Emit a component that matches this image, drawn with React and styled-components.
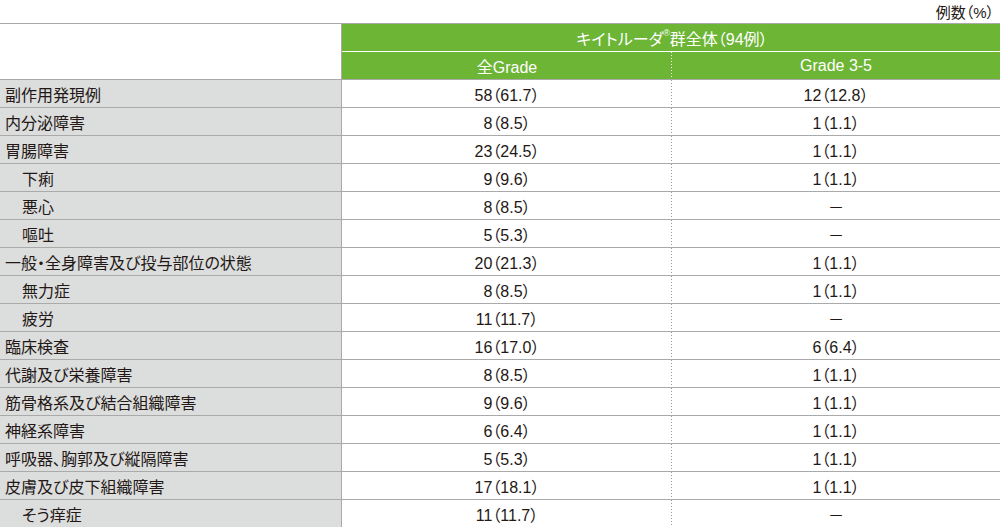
import React from "react";
import styled, { createGlobalStyle } from "styled-components";

const GlobalStyle = createGlobalStyle`
  body {
    margin: 0;
    background: #fff;
    font-family: "Liberation Sans", "Noto Sans CJK JP", sans-serif;
    color: #231815;
  }
`;

const rows = [
  ["副作用発現例", "58（61.7）", "12（12.8）"],
  ["内分泌障害", "8（8.5）", "1（1.1）"],
  ["胃腸障害", "23（24.5）", "1（1.1）"],
  ["下痢", "9（9.6）", "1（1.1）", true],
  ["悪心", "8（8.5）", "－", true],
  ["嘔吐", "5（5.3）", "－", true],
  ["一般・全身障害及び投与部位の状態", "20（21.3）", "1（1.1）"],
  ["無力症", "8（8.5）", "1（1.1）", true],
  ["疲労", "11（11.7）", "－", true],
  ["臨床検査", "16（17.0）", "6（6.4）"],
  ["代謝及び栄養障害", "8（8.5）", "1（1.1）"],
  ["筋骨格系及び結合組織障害", "9（9.6）", "1（1.1）"],
  ["神経系障害", "6（6.4）", "1（1.1）"],
  ["呼吸器、胸郭及び縦隔障害", "5（5.3）", "1（1.1）"],
  ["皮膚及び皮下組織障害", "17（18.1）", "1（1.1）"],
  ["そう痒症", "11（11.7）", "－", true],
];

const GREEN = "#6cb535";
const LINE = "#aaaaaa";
const COLS = "342px 330px 1fr";

const dotted = (color) => `
  background-image: linear-gradient(to bottom, ${color} 1px, transparent 1px);
  background-size: 1px 3px;
  background-repeat: repeat-y;
  background-position: right top;
`;

const Page = styled.div`
  width: 1000px;
  font-feature-settings: "palt";
`;

const Caption = styled.div`
  height: 23px;
  display: flex;
  align-items: center;
  justify-content: flex-end;
  padding-right: 6px;
  font-size: 15px;
`;

const Head = styled.div`
  display: grid;
  grid-template-columns: ${COLS};
  grid-template-rows: 27px 28px;
  border-top: 1px solid ${LINE};
`;

const Corner = styled.div`
  grid-row: 1 / 3;
  background: #fff;
  border-right: 1px solid ${LINE};
`;

const GroupCell = styled.div`
  grid-column: 2 / 4;
  background: ${GREEN};
  color: #fff;
  font-size: 16px;
  display: flex;
  align-items: center;
  justify-content: center;
  padding-left: 2px;

  sup {
    font-size: 9px;
    line-height: 1;
    align-self: flex-start;
    margin-top: 5px;
  }
`;

const GradeCell = styled.div`
  background-color: ${GREEN};
  ${(p) => p.$divider && dotted("#ffffff")}
  border-top: 1px solid #fff;
  color: #fff;
  font-size: 16px;
  display: flex;
  align-items: center;
  justify-content: center;
`;

const Row = styled.div`
  display: grid;
  grid-template-columns: ${COLS};
  height: 28px;
  border-top: 1px solid ${LINE};
  box-sizing: border-box;
`;

const Label = styled.div`
  background: #dcdddd;
  border-right: 1px solid ${LINE};
  display: flex;
  align-items: center;
  padding-left: ${(p) => (p.$sub ? "22px" : "5px")};
  font-size: 16px;
  white-space: nowrap;
`;

const Value = styled.div`
  ${(p) => p.$divider && dotted("#9a9a9a")}
  display: flex;
  align-items: center;
  justify-content: center;
  font-size: 16px;
`;

export default function App() {
  return (
    <Page>
      <GlobalStyle />
      <Caption>例数（%）</Caption>
      <Head>
        <Corner />
        <GroupCell>
          キイトルーダ<sup>®</sup>群全体（94例）
        </GroupCell>
        <GradeCell $divider>全Grade</GradeCell>
        <GradeCell>Grade 3-5</GradeCell>
      </Head>
      {rows.map(([name, all, severe, sub]) => (
        <Row key={name}>
          <Label $sub={sub}>{name}</Label>
          <Value $divider>{all}</Value>
          <Value>{severe}</Value>
        </Row>
      ))}
    </Page>
  );
}
